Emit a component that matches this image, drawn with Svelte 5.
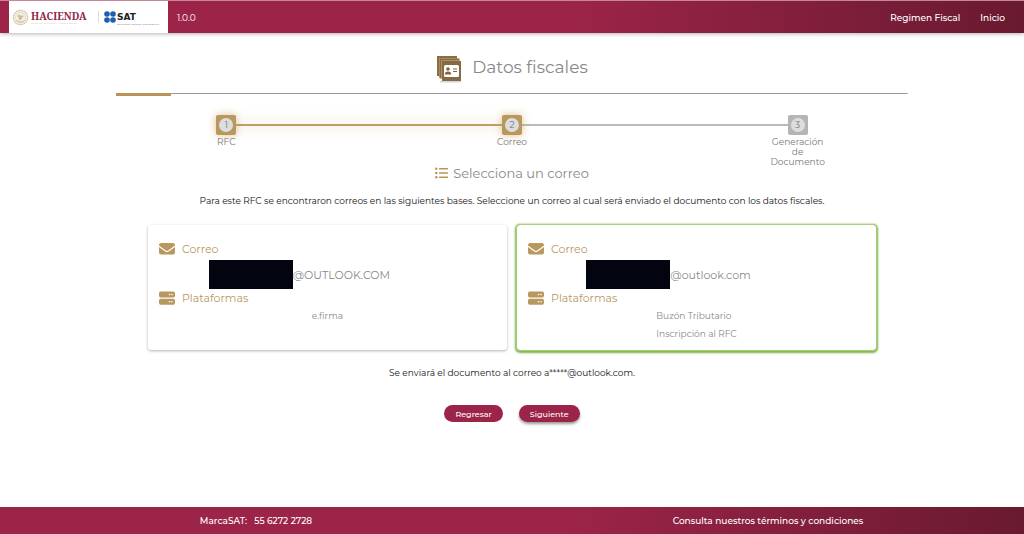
<script>
	const version = '1.0.0';

	const steps = [
		{ label: 'RFC', done: true },
		{ label: 'Correo', done: true },
		{ label: 'Generación de Documento', done: false }
	];

	const correos = [
		{ domain: '@OUTLOOK.COM', plataformas: ['e.firma'] },
		{ domain: '@outlook.com', plataformas: ['Buzón Tributario', 'Inscripción al RFC'] }
	];

	let selected = $state(1);
</script>

<div class="page">
	<header>
		<div class="logos">
			<svg class="seal" viewBox="0 0 18 18" aria-hidden="true">
				<circle cx="9" cy="9" r="7.6" fill="#f4efe5" stroke="#cbbd9d" stroke-width="1.2" stroke-dasharray="1.2 .5" />
				<circle cx="9" cy="9" r="5.4" fill="none" stroke="#ddd2bb" stroke-width=".7" />
				<path d="M5.5 7.5c2-2.5 3.5-1 3.8.2 1-1.7 2.4-1.2 3.2.3-1.2-.2-1.6.5-1.8 1.6-.3 1.6-2 2.6-3.9 2.1 1-.5 1.2-1.3.7-2-.6-.8-1-1.7-2-2.2z" fill="#cbbb98" />
				<path d="M4.5 12c2.5 2.5 6.5 2.5 9 0" fill="none" stroke="#c3b28c" stroke-width="1" />
			</svg>
			<div class="hacienda">
				<strong>HACIENDA</strong>
				<small>SECRETARÍA DE HACIENDA Y CRÉDITO PÚBLICO</small>
			</div>
			<span class="divider"></span>
			<svg class="dots" viewBox="0 0 12 12" aria-hidden="true">
				<g fill="#1d5fae">
					<circle cx="3" cy="3" r="2.8" />
					<circle cx="9" cy="3" r="2.8" />
					<circle cx="3" cy="9" r="2.8" />
					<circle cx="9" cy="9" r="2.8" />
				</g>
			</svg>
			<div class="sat">
				<strong>SAT</strong>
				<small>SERVICIO DE ADMINISTRACIÓN TRIBUTARIA</small>
			</div>
		</div>
		<span class="version">{version}</span>
		<nav>
			<a href="#regimen">Regimen Fiscal</a>
			<a href="#inicio">Inicio</a>
		</nav>
	</header>

	<main>
		<div class="title">
			<svg viewBox="0 0 26 28" aria-hidden="true">
				<path d="M4 26h21v1.5H4z" fill="#d5d5d5" />
				<path d="M1 1h20v20H1z" fill="#8b6d44" />
				<path d="M3 3h19v19H3z" fill="#bfa67e" />
				<path d="M3.5 3.5h20v20h-20z" fill="#8b6d44" />
				<path d="M5.500 5.500H24V24H5.500z" fill="#cdb993" />
				<path d="M6 6h19v20H6z" fill="#866a46" />
				<rect x="8" y="10" width="15" height="12" rx="1.5" fill="#fff" />
				<circle cx="12" cy="14" r="1.8" fill="#80643f" />
				<path d="M8.800 19.500c0-2.200 1.200-3 3.200-3s3.200.8 3.200 3z" fill="#80643f" />
				<path d="M17 13.500h4v1h-4zM17 16h4v1h-4z" fill="#80643f" />
			</svg>
			<h1>Datos fiscales</h1>
		</div>
		<div class="rule"></div>

		<ol class="stepper">
			{#each steps as step, i}
				{#if i > 0}
					<li class="line" class:done={step.done} aria-hidden="true"></li>
				{/if}
				<li class="step" class:done={step.done}>
					<span class="box"><span class="num">{i + 1}</span></span>
					<span class="label">{step.label}</span>
				</li>
			{/each}
		</ol>

		<h2>
			<svg viewBox="0 0 13 12" fill="#b8935a" aria-hidden="true">
				<circle cx="1.3" cy="1.8" r="1.2" />
				<circle cx="1.3" cy="6" r="1.2" />
				<circle cx="1.3" cy="10.2" r="1.2" />
				<rect x="4" y="1" width="9" height="1.6" rx=".5" />
				<rect x="4" y="5.2" width="9" height="1.6" rx=".5" />
				<rect x="4" y="9.4" width="9" height="1.6" rx=".5" />
			</svg>
			Selecciona un correo
		</h2>

		<p class="intro">
			Para este RFC se encontraron correos en las siguientes bases. Seleccione un correo al cual será
			enviado el documento con los datos fiscales.
		</p>

		<div class="cards">
			{#each correos as correo, i}
				<label class="card" class:selected={selected === i}>
					<input type="radio" name="correo" value={i} bind:group={selected} />
					<span class="field">
						<svg viewBox="0 0 16 14" aria-hidden="true">
							<path fill="#b8985f" d="M2 1h12a2 2 0 0 1 2 2v.5L9.2 8.5a2 2 0 0 1-2.4 0L0 3.5V3a2 2 0 0 1 2-2zM0 5l6.2 4.6a3 3 0 0 0 3.6 0L16 5v5.5a2 2 0 0 1-2 2H2a2 2 0 0 1-2-2z" />
						</svg>
						Correo
					</span>
					<span class="email"><span class="redacted"></span>{correo.domain}</span>
					<span class="field">
						<svg viewBox="0 0 16 14" aria-hidden="true">
							<rect width="16" height="6" y=".5" rx="1.7" fill="#b8985f" />
							<rect width="16" height="6" y="7.7" rx="1.7" fill="#b8985f" />
							<g fill="#fff">
								<circle cx="10.5" cy="3.5" r=".8" />
								<circle cx="13" cy="3.5" r=".8" />
								<circle cx="10.5" cy="10.7" r=".8" />
								<circle cx="13" cy="10.7" r=".8" />
							</g>
						</svg>
						Plataformas
					</span>
					<span class="plataformas">
						{#each correo.plataformas as plataforma}
							<span>{plataforma}</span>
						{/each}
					</span>
				</label>
			{/each}
		</div>

		<p class="notice">Se enviará el documento al correo a*****@outlook.com.</p>

		<div class="actions">
			<button type="button">Regresar</button>
			<button type="button" class="next">Siguiente</button>
		</div>
	</main>

	<footer>
		<span>MarcaSAT: &nbsp; 55 6272 2728</span>
		<a href="#terminos">Consulta nuestros términos y condiciones</a>
	</footer>
</div>

<style>
	:global(body) {
		background: #fff;
	}
	.page {
		display: flex;
		flex-direction: column;
		min-height: 100vh;
		font-family: Montserrat, Inter, sans-serif;
		font-size: 9px;
		color: #111;
	}
	header {
		display: flex;
		align-items: stretch;
		height: 33px;
		box-sizing: border-box;
		padding: 0 19px 0 9px;
		border-top: 1px solid #c4869a;
		background: linear-gradient(90deg, #9d2449 55%, #691a30);
		box-shadow: 0 1px 4px rgba(0, 0, 0, 0.3);
		color: #fff;
	}
	header a,
	footer a {
		color: inherit;
		text-decoration: none;
	}
	.logos {
		display: flex;
		align-items: center;
		width: 159px;
		padding-left: 3px;
		box-sizing: border-box;
		background: #fff;
	}
	.seal {
		width: 17px;
		height: 17px;
	}
	.hacienda,
	.sat {
		display: flex;
		flex-direction: column;
		white-space: nowrap;
	}
	.hacienda {
		width: 61px;
		margin-left: 2px;
		color: #8f2746;
		font-family: 'Noto Serif', 'Liberation Serif', serif;
	}
	.hacienda strong {
		font-size: 10px;
		line-height: 12px;
	}
	.hacienda small {
		color: #c5ae82;
		font-family: 'Liberation Serif', serif;
		font-size: 2px;
		line-height: 3px;
	}
	.divider {
		width: 1px;
		height: 12px;
		margin: 0 5px 0 6px;
		background: #ddd;
	}
	.dots {
		width: 12px;
		height: 12px;
	}
	.sat {
		margin-left: 1px;
		padding-top: 2px;
		color: #222;
	}
	.sat strong {
		font-family: 'DejaVu Sans', sans-serif;
		font-size: 9px;
		line-height: 11px;
	}
	.sat small {
		color: #777;
		font-family: 'Liberation Sans', sans-serif;
		font-size: 2px;
		line-height: 2px;
	}
	.version {
		align-self: center;
		margin-left: 9px;
	}
	nav {
		display: flex;
		align-items: center;
		gap: 20px;
		margin-left: auto;
		font-weight: 500;
	}
	main {
		flex: 1;
		display: flex;
		flex-direction: column;
		width: 77.3%;
		margin: 0 auto;
	}
	h1,
	h2,
	p,
	ol {
		margin: 0;
		padding: 0;
	}
	.title {
		display: flex;
		align-items: center;
		justify-content: center;
		gap: 10px;
		height: 40px;
		margin-top: 14px;
	}
	.title svg {
		width: 26px;
		height: 28px;
		margin-top: 4px;
	}
	h1 {
		color: #888;
		font-size: 17px;
		font-weight: 400;
		line-height: 20px;
	}
	.rule {
		height: 3px;
		margin-top: 6px;
		background:
			linear-gradient(#b8935a, #b8935a) left / 7% 3px no-repeat,
			linear-gradient(#999, #999) top / 100% 1px no-repeat;
	}
	.stepper {
		display: flex;
		align-items: flex-start;
		width: 80%;
		margin: 19px auto 0;
		list-style: none;
		color: #777;
	}
	.step {
		position: relative;
		display: flex;
		flex-direction: column;
		align-items: center;
		gap: 2px;
		width: 62px;
	}
	.box {
		display: flex;
		padding: 3px;
		border-radius: 2px;
		background: #b5b5b5;
	}
	.done .box {
		background: #b8985f;
		box-shadow: 0 0 8px rgba(200, 150, 70, 0.6);
	}
	.num {
		width: 14px;
		height: 14px;
		border-radius: 50%;
		background: #ddd;
		line-height: 14px;
		text-align: center;
	}
	.label {
		line-height: 10px;
		text-align: center;
	}
	.line {
		flex: 1;
		height: 2px;
		margin: 9px -21px 0;
		background: #bbb;
	}
	.line.done {
		background: #c09d62;
		box-shadow: 0 0 12px rgba(200, 150, 70, 0.5);
	}
	h2 {
		display: flex;
		align-items: center;
		justify-content: center;
		gap: 5px;
		margin-top: -2px;
		color: #888;
		font-size: 13px;
		font-weight: 400;
		line-height: 16px;
	}
	h2 svg {
		width: 13px;
		height: 12px;
	}
	.intro,
	.notice {
		line-height: 12px;
		text-align: center;
	}
	.intro {
		margin-top: 14px;
	}
	.cards {
		display: grid;
		grid-template-columns: 1fr 1fr;
		gap: 10px;
		margin: 18px 4% 0;
	}
	.card {
		position: relative;
		display: flex;
		flex-direction: column;
		min-height: 125px;
		box-sizing: border-box;
		padding: 17px 11px 8px;
		border-radius: 3px;
		box-shadow: 0 1px 3px rgba(0, 0, 0, 0.3);
		color: #888;
		cursor: pointer;
	}
	.card.selected {
		box-shadow:
			0 0 1px 1px #a9cf83,
			0 1px 2px 2px #7cb342;
	}
	.card input {
		position: absolute;
		opacity: 0;
	}
	.field {
		display: flex;
		align-items: center;
		gap: 7px;
		color: #b8985f;
		font-size: 11px;
		line-height: 14px;
	}
	.field svg {
		width: 16px;
		height: 14px;
	}
	.email {
		display: flex;
		align-items: center;
		justify-content: center;
		margin: 4px 0 2px;
		padding-right: 56px;
		font-size: 11px;
	}
	.redacted {
		width: 84px;
		height: 29px;
		background: #02040f;
	}
	.plataformas {
		align-self: center;
		display: flex;
		flex-direction: column;
		gap: 6px;
		margin-top: 5px;
		line-height: 12px;
	}
	.notice {
		margin-top: 17px;
	}
	.actions {
		display: flex;
		justify-content: center;
		gap: 16px;
		margin: 26px 0;
	}
	button {
		height: 17px;
		padding: 0 11px;
		border: 0;
		border-radius: 9px;
		background: #9d2449;
		color: #fff;
		font: inherit;
		font-size: 8px;
		font-weight: 500;
		cursor: pointer;
	}
	.next {
		box-shadow: 0 2px 3px rgba(0, 0, 0, 0.4);
	}
	footer {
		display: grid;
		grid-template-columns: 1fr 1fr;
		align-items: center;
		justify-items: center;
		height: 27px;
		background: linear-gradient(90deg, #9d2449 55%, #691a30);
		color: #fff;
		font-weight: 500;
	}
</style>
